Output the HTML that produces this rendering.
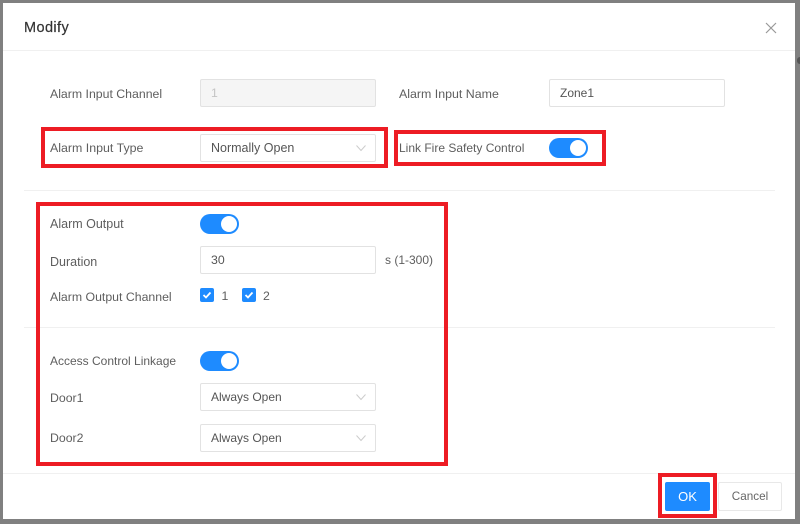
<!DOCTYPE html>
<html><head><meta charset="utf-8"><style>
html,body{margin:0;padding:0}
body{width:800px;height:524px;overflow:hidden;background:#808080;position:relative;font-family:"Liberation Sans",sans-serif;font-size:12.3px;color:#5e5e5e}
#w{position:absolute;left:0;top:0;width:800px;height:524px;filter:blur(.35px)}
.m{position:absolute;left:3px;top:3px;width:792px;height:516px;background:#fff}
.a{position:absolute}
.t{position:absolute;line-height:16px;white-space:nowrap}
.i{position:absolute;box-sizing:border-box;width:176px;height:28px;border:1px solid #e2e2e2;border-radius:2px;background:#fff;line-height:26px;padding-left:10px;color:#555}
.l{position:absolute;background:#f0f0f0;height:1px}
.r{position:absolute;box-sizing:border-box;border:4px solid #ed1c24}
.s{position:absolute;width:39px;height:20px;border-radius:10px;background:#1e8bff}
.s:after{content:"";position:absolute;right:2px;top:2px;width:16px;height:16px;border-radius:50%;background:#fff}
.c{position:absolute;width:14px;height:14px;border-radius:2px;background:#1e8bff}
svg{position:absolute;overflow:visible}
</style></head><body><div id="w">
<div class="a" style="left:797px;top:57px;width:3px;height:7px;background:#555;border-radius:3px 0 0 3px"></div>
<div class="m"></div>
<div class="t" style="left:24px;top:20px;font-size:14.5px;letter-spacing:.4px;color:#333;-webkit-text-stroke:.2px #333">Modify</div>
<svg style="left:765px;top:22px" width="12" height="12"><path d="M1 1L11 11M11 1L1 11" stroke="#999" stroke-width="1.2" fill="none"/></svg>
<div class="l" style="left:3px;top:50px;width:792px"></div>
<div class="l" style="left:24px;top:190px;width:751px"></div>
<div class="l" style="left:24px;top:327px;width:751px"></div>
<div class="l" style="left:3px;top:473px;width:792px"></div>

<div class="t" style="left:50px;top:86px">Alarm Input Channel</div>
<div class="i" style="left:200px;top:79px;background:#f5f5f5;color:#c4c4c4">1</div>
<div class="t" style="left:399px;top:86px;font-size:12.4px">Alarm Input Name</div>
<div class="i" style="left:549px;top:79px;font-size:12px">Zone1</div>

<div class="r" style="left:41px;top:127px;width:347px;height:41px"></div>
<div class="t" style="left:50px;top:140px;font-size:12.4px">Alarm Input Type</div>
<div class="i" style="left:200px;top:134px;font-size:12.5px">Normally Open</div>
<svg style="left:356px;top:145px" width="10" height="6"><path d="M.5 .5L5 5.5L9.5 .5" stroke="#ccc" fill="none"/></svg>
<div class="r" style="left:394px;top:130px;width:212px;height:36px"></div>
<div class="t" style="left:399px;top:140px;font-size:12px">Link Fire Safety Control</div>
<div class="s" style="left:549px;top:138px"></div>

<div class="r" style="left:36px;top:202px;width:412px;height:264px"></div>

<div class="t" style="left:50px;top:216px;font-size:12.5px">Alarm Output</div>
<div class="s" style="left:200px;top:214px"></div>
<div class="t" style="left:50px;top:254px;font-size:12.5px">Duration</div>
<div class="i" style="left:200px;top:246px">30</div>
<div class="t" style="left:385px;top:252px;font-size:12px">s (1-300)</div>
<div class="t" style="left:50px;top:289px">Alarm Output Channel</div>
<div class="c" style="left:200px;top:288px"></div>
<svg style="left:200px;top:288px" width="14" height="14"><path d="M3.5 7L6 9.5L10.5 4.5" stroke="#fff" stroke-width="1.8" fill="none"/></svg>
<div class="t" style="left:221.500px;top:288px">1</div>
<div class="c" style="left:242px;top:288px"></div>
<svg style="left:242px;top:288px" width="14" height="14"><path d="M3.5 7L6 9.5L10.5 4.5" stroke="#fff" stroke-width="1.8" fill="none"/></svg>
<div class="t" style="left:263px;top:288px">2</div>

<div class="t" style="left:50px;top:353px;font-size:12px">Access Control Linkage</div>
<div class="s" style="left:200px;top:351px"></div>
<div class="t" style="left:50px;top:390px">Door1</div>
<div class="i" style="left:200px;top:383px;font-size:12px">Always Open</div>
<svg style="left:356px;top:394px" width="10" height="6"><path d="M.5 .5L5 5.5L9.5 .5" stroke="#ccc" fill="none"/></svg>
<div class="t" style="left:50px;top:430px">Door2</div>
<div class="i" style="left:200px;top:424px;font-size:12px">Always Open</div>
<svg style="left:356px;top:435px" width="10" height="6"><path d="M.5 .5L5 5.5L9.5 .5" stroke="#ccc" fill="none"/></svg>

<div class="r" style="left:658px;top:473px;width:59px;height:45px"></div>
<div class="a" style="left:665px;top:482px;width:45px;height:29px;background:#1e8bff;border-radius:2px;color:#fff;text-align:center;line-height:29px;font-size:13px">OK</div>
<div class="a" style="left:718px;top:482px;width:64px;height:29px;box-sizing:border-box;border:1px solid #e8e8e8;border-radius:2px;text-align:center;line-height:28px;color:#666;font-size:11.7px">Cancel</div>
</div></body></html>
